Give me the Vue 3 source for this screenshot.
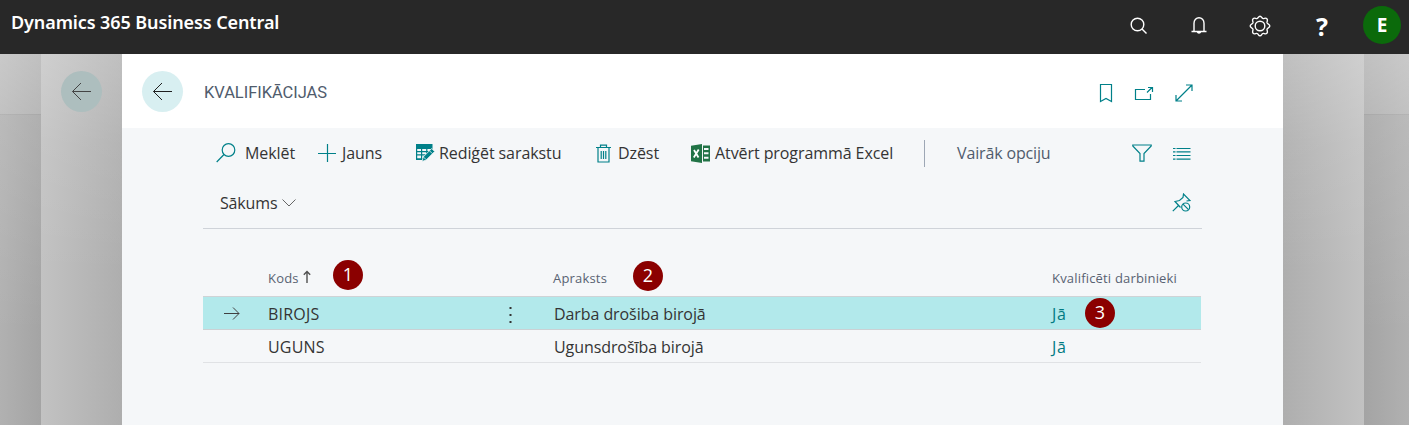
<script setup>
const rows = [
  { code: 'BIROJS', description: 'Darba drošiba birojā', qualified: 'Jā', selected: true, marker: '3' },
  { code: 'UGUNS', description: 'Ugunsdrošība birojā', qualified: 'Jā', selected: false }
]
</script>

<template>
  <div class="app">
    <header class="topbar">
      <span class="brand">Dynamics 365 Business Central</span>
      <nav class="top-actions">
        <svg class="search-top" width="18" height="18" viewBox="0 0 18 18"><circle cx="7.500" cy="7.500" r="6.300" /><path d="M12 12 16.500 16.500" /></svg>
        <svg class="bell" width="16" height="19" viewBox="0 0 16 19"><path d="M.5 15.500h15M3 15V7.200a5 5.500 0 0 1 10 0V15M6.300 15.800a1.800 1.800 0 0 0 3.400 0" /></svg>
        <svg class="gear" width="22" height="22" viewBox="0 0 22 22"><circle cx="11" cy="11" r="4.800" /><path d="M11 1.200c1.800 0 1.500 2.200 3.100 2.400 1.200.2 2.400-1.300 3.800.1s-.1 2.700.1 4c.3 1.600 2.800 1.400 2.800 3.300s-2.500 1.700-2.800 3.300c-.2 1.300 1.400 2.500-.1 4s-2.600-.1-3.800.1c-1.600.2-1.300 2.400-3.100 2.400s-1.500-2.200-3.100-2.400c-1.200-.2-2.400 1.300-3.800-.1s.1-2.700-.1-4C3.700 12.700 1.200 12.900 1.200 11s2.500-1.700 2.800-3.300c.2-1.300-1.400-2.500.1-4s2.600.1 3.800-.1C9.500 3.400 9.200 1.200 11 1.200Z" /></svg>
        <span class="help">?</span>
        <span class="avatar">E</span>
      </nav>
    </header>

    <main class="backdrop">
      <div class="edge"></div>
      <div class="sheet-side">
        <span class="back dim"><svg width="21" height="19" viewBox="0 0 21 19"><path d="M20 9.500H1.500M10 1 1.500 9.500 10 18" /></svg></span>
      </div>
      <section class="dialog">
        <div class="dialog-head">
          <span class="back"><svg width="21" height="19" viewBox="0 0 21 19"><path d="M20 9.500H1.500M10 1 1.500 9.500 10 18" /></svg></span>
          <h1>KVALIFIKĀCIJAS</h1>
          <div class="window-actions">
            <svg width="14" height="20" viewBox="0 0 14 20"><path d="M1.500 1.500h11v17L7 15.500l-5.500 3Z" /></svg>
            <svg width="20" height="15" viewBox="0 0 20 15"><path d="M11 3.500H1.500v10h15V8M13 6.500 18 1.500M14 1.500h4.500V6" /></svg>
            <svg width="18" height="18" viewBox="0 0 18 18"><path d="M1 17 17 1M11 1h6v6M1 11v6h6" /></svg>
          </div>
        </div>

        <div class="content">
          <div class="toolbar">
            <span class="tool search"><svg width="20" height="20" viewBox="0 0 20 20"><circle cx="12.500" cy="7" r="6.300" /><path d="M8 11.500.7 19" /></svg><b>Meklēt</b></span>
            <span class="tool new"><svg width="18" height="18" viewBox="0 0 18 18"><path d="M9.500 0v18M0 9.500h18" /></svg><b>Jauns</b></span>
            <span class="tool edit">
              <svg width="19" height="18" viewBox="0 0 19 18"><path class="solid" d="M0 0h16.500v7L9 16H0Z" /><path class="cells" d="M1.200 5h3.800v2H1.200zM6.200 5h4v2h-4zM11.400 5h4v2h-4zM1.200 8.300h3.800v2H1.200zM6.200 8.300h4v2h-4zM1.200 11.600h3.800v2.600H1.200zM6.200 11.600h2.500v2.600H6.200z" /><path class="pencil" d="m6 17.500 1.200-4.500 8.500-8.500 3 3-8.500 8.500Z" /><path class="shine" d="m13.700 7 2.500 2.500M7.700 13.200l2.300 2.300" /></svg>
              <b>Rediģēt sarakstu</b>
            </span>
            <span class="tool delete"><svg width="15" height="19" viewBox="0 0 15 19"><path d="M0 3.500h15M4.500 3V1.200h6V3M2 4v14h11V4M5.200 7v8M7.500 7v8M9.800 7v8" /></svg><b>Dzēst</b></span>
            <span class="tool excel">
              <svg width="19" height="19" viewBox="0 0 19 19"><path class="green" d="M0 1.800 11 0v19L0 17.200ZM12 1.500h7v16h-7z" /><path class="white" d="M13 4h4.500v2H13zM13 8.300h4.500v2H13zM13 12.700h4.500v2H13z" /><path class="x" d="m3 6 4.500 7.500M7.700 5.500 2.800 13.500" /></svg>
              <b>Atvērt programmā Excel</b>
            </span>
            <span class="tool more"><b>Vairāk opciju</b></span>
            <svg class="filter" width="20" height="18" viewBox="0 0 20 18"><path d="M.8 1h18.400v1L12 9.500v7.700H8V9.500L.8 2Z" /></svg>
            <svg class="list" width="18" height="13" viewBox="0 0 18 13"><path d="M0 1.500h2.500M3.500 1.500h14M0 4.800h2.500M3.500 4.800h14M0 8.500h2.500M3.500 8.500h14M0 12.200h2.500M3.500 12.200h14" /></svg>
          </div>
          <div class="subbar">
            <span class="home">Sākums</span>
            <svg class="chevron" width="14" height="8" viewBox="0 0 14 8"><path d="m.5.5 6.500 6.500 6.500-6.500" /></svg>
            <svg class="pin" width="19" height="19" viewBox="0 0 19 19"><path d="M.8 18.200 6.500 12.500M8.500 14.500 3 8.500 7.500 7.500 11 4.500 11.500 1 18 7.500 14.500 8" /><circle cx="13.700" cy="14" r="4" /><path d="m11 11.200 5.500 5.500" /></svg>
          </div>

          <div class="table">
            <div class="row head">
              <span class="col-code"><i>Kods</i><svg width="8" height="13" viewBox="0 0 8 13"><path d="M4 13V1.500M.8 4.700 4 1.500 7.200 4.700" /></svg><em class="marker one">1</em></span>
              <span></span>
              <span><i>Apraksts</i><em class="marker two">2</em></span>
              <span><i>Kvalificēti darbinieki</i></span>
            </div>
            <div v-for="row in rows" :key="row.code" class="row" :class="{ selected: row.selected }">
              <span class="code"><svg v-if="row.selected" class="row-arrow" width="16" height="13" viewBox="0 0 16 13"><path d="M0 6.500h15M9 .5l6 6-6 6" /></svg><i>{{ row.code }}</i></span>
              <span><svg v-if="row.selected" class="dots" width="3" height="17" viewBox="0 0 3 17"><path d="M.5 1h2v2h-2zM.5 8h2v2h-2zM.5 15h2v2h-2z" /></svg></span>
              <span class="desc"><i>{{ row.description }}</i></span>
              <span class="link"><i>{{ row.qualified }}</i><em v-if="row.marker" class="marker three">{{ row.marker }}</em></span>
            </div>
          </div>
        </div>
      </section>
      <div class="sheet-side right"></div>
      <div class="edge right"></div>
    </main>
  </div>
</template>

<style>
body { margin: 0; overflow: hidden; }
</style>

<style scoped>
.app { width: 1409px; height: 425px; overflow: hidden; font-family: "Open Sans", "Noto Sans", sans-serif; color: #343434; }
.app * { box-sizing: border-box; }
svg { display: block; flex: none; fill: none; stroke: #008089; stroke-width: 1.2; }
i, em, b { font-style: normal; font-weight: 400; white-space: nowrap; }

.topbar { height: 54px; background: #282828; color: #fff; display: flex; justify-content: space-between; padding-left: 11px; }
.brand { font: 600 18px/24px "Noto Sans", sans-serif; letter-spacing: -.1px; padding-top: 10px; white-space: nowrap; }
.top-actions { display: flex; align-items: center; height: 51px; }
.top-actions svg { stroke: #fff; stroke-width: 1.4; }
.search-top { margin-right: 43px; }
.bell { margin-right: 42px; }
.gear { margin-right: 45px; }
.help { width: 13px; margin-right: 34px; font: 700 25px/50px "Noto Sans", sans-serif; }
.avatar { width: 38px; height: 38px; border-radius: 50%; background: #0b6a0b; margin: 0 8px 1px 0; font: 700 19px/39px "Open Sans", sans-serif; text-align: center; }

.backdrop { height: 371px; display: flex; }
.edge { width: 41px; background: linear-gradient(#ffffff50, #ffffff38 60px, #ffffff0c 60px, #ffffff0c 61px, #ffffff20 61px, #ffffff00 280px), linear-gradient(90deg, #b1b1b1, #a4a4a4); }
.edge.right { width: 45px; background: linear-gradient(#ffffff50, #ffffff38 60px, #ffffff0c 60px, #ffffff0c 61px, #ffffff20 61px, #ffffff00 280px), linear-gradient(270deg, #b1b1b1, #a4a4a4); }
.sheet-side { width: 81px; padding: 17px 0 0 20px; background: linear-gradient(#ffffff38, #ffffff14 90px, #ffffff00 220px), linear-gradient(90deg, #c2c2c2, #aeaeae); }
.sheet-side.right { background: linear-gradient(#ffffff38, #ffffff14 90px, #ffffff00 220px), linear-gradient(270deg, #c2c2c2, #aeaeae); }
.back { width: 41px; height: 41px; border-radius: 50%; background: #d8eff1; display: flex; align-items: center; justify-content: center; }
.back svg { stroke: #202020; stroke-width: 1; }
.back.dim { background: #adbebe; }
.back.dim svg { stroke: #444; }

.dialog { width: 1161px; background: #f5f7f9; }
.dialog-head { height: 74px; background: #fff; display: flex; padding: 17px 90px 0 20px; }
h1 { font: 400 16.500px/20px Roboto, sans-serif; color: #505c6d; margin: 12px 0 0 21px; white-space: nowrap; letter-spacing: -.05px; }
.window-actions { display: flex; align-items: center; gap: 21px; height: 44px; margin-left: auto; }
.content { margin: 0 81px; }

.toolbar { height: 50px; display: flex; align-items: center; font-size: 16px; letter-spacing: -.08px; }
.tool { display: flex; align-items: center; height: 24px; flex: none; }
.search { width: 101px; padding-left: 13px; gap: 9px; }
.new { width: 98px; padding-left: 14px; gap: 6px; }
.edit { width: 180px; padding-left: 14px; gap: 4px; }
.edit .solid { fill: #008089; stroke: none; }
.edit .cells { fill: #f5f7f9; stroke: none; }
.edit .pencil { fill: #008089; stroke: #f5f7f9; stroke-width: .8; }
.edit .shine { stroke: #f5f7f9; stroke-width: .8; }
.delete { width: 109px; padding-left: 14px; gap: 7px; }
.excel { width: 233px; gap: 5px; }
.excel path { stroke: none; }
.excel .green { fill: #217346; }
.excel .white { fill: #f5f7f9; }
.excel .x { stroke: #fff; stroke-width: 1.8; }
.more { height: 27px; width: 208px; padding-left: 32px; border-left: 1px solid #9da7b5; color: #505c6d; letter-spacing: -.15px; }
.list { margin-left: 21px; }
.subbar { height: 51px; width: 999px; border-bottom: 1px solid #cfd3d9; display: flex; padding: 0 11px 0 17px; font-size: 16px; letter-spacing: -.15px; }
.home { line-height: 50px; }
.chevron { margin: 21px 0 0 5px; stroke: #666; stroke-width: 1; }
.pin { margin: 15px 0 0 auto; }

.table { width: 998px; margin-top: 27px; }
.row { height: 33px; display: grid; grid-template-columns: 275px 75px 499px 149px; border-bottom: 1px solid #e0e2e5; font-size: 16px; line-height: 35px; letter-spacing: -.08px; }
.row > span { display: flex; position: relative; min-width: 0; }
.row.head { height: 41px; border-bottom-color: #cfd3d6; font-size: 13px; line-height: 44px; letter-spacing: .18px; color: #586272; }
.row.selected { background: #b2e9eb; border-bottom-color: #cbd1d4; }
.head .col-code { padding-left: 65px; }
.head svg { margin: 14px 0 0 4px; stroke: #505050; stroke-width: 1.4; }
.row .code { padding-left: 65px; letter-spacing: .2px; }
.row-arrow { position: absolute; left: 21px; top: 10px; stroke: #404040; stroke-width: 1; }
.dots { margin: 9px 0 0 31px; fill: #333; stroke: none; }
.desc { padding-left: 1px; }
.row .link { color: #007a82; letter-spacing: .7px; }
.marker { position: absolute; width: 30px; height: 30px; border-radius: 50%; background: #8b0000; color: #fff; text-align: center; font: 400 18px/29px "Open Sans", sans-serif; letter-spacing: 0; }
.one { left: 130px; top: 4px; }
.two { left: 80px; top: 5px; }
.three { left: 33px; top: 1px; }
</style>
